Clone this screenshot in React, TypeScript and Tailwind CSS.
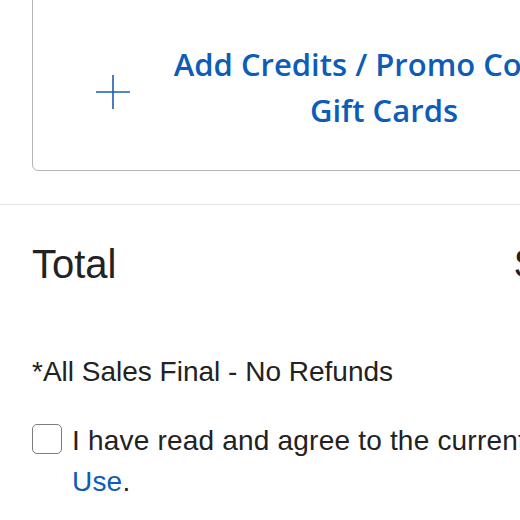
export default function App() {
  return (
    <div
      className="h-[520px] w-[520px] overflow-hidden bg-white text-[#222]"
      style={{ fontFamily: "'Liberation Sans', Arial, sans-serif" }}
    >
      <div className="w-[700px]">
        <div className="px-8">
          <div className="-mt-5 flex w-[640px] items-start rounded-md border border-[#b5b5b5] pb-[37px] pl-[63px] pt-[60px]">
            <svg
              viewBox="0 0 34 34"
              className="mt-[34px] h-[34px] w-[34px] shrink-0 text-[#1b5fae]"
              fill="none"
              stroke="currentColor"
              strokeWidth={1.6}
            >
              <path d="M17 0v34M0 17h34" />
            </svg>
            <button
              type="button"
              className="ml-[4px] w-[500px] whitespace-nowrap text-center text-[31px] font-semibold leading-[46px] text-[#0d5db8]"
              style={{ fontFamily: "'Open Sans', 'Liberation Sans', sans-serif" }}
            >
              Add Credits / Promo Codes /<br />
              Gift Cards
            </button>
          </div>
        </div>

        <div className="mt-[33px] h-px bg-[#e6e6e6]" />

        <div className="px-8">
          <div className="mt-[35px] flex w-[583px] items-center justify-between text-[40px] leading-[48px]">
            <p>Total</p>
            <p>$9.99</p>
          </div>

          <p className="mt-[68px] text-[28px] leading-[32px]">*All Sales Final - No Refunds</p>

          <label className="mt-[32px] flex items-start gap-[10px] text-[28px] leading-[41px] tracking-[0.2px]">
            <input type="checkbox" className="sr-only" />
            <span className="mt-[4px] h-[30px] w-[30px] shrink-0 rounded-[5px] border-[1.5px] border-[#7d7d7d] bg-white" />
            <span className="w-[620px]">
              I have read and agree to the current Terms of
              <br />
              <a href="#" className="text-[#0d5db8]">
                Use
              </a>
              .
            </span>
          </label>
        </div>
      </div>
    </div>
  );
}
